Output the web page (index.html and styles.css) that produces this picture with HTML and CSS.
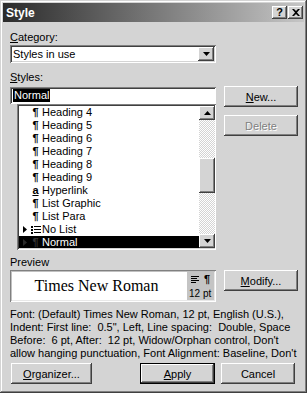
FILE: index.html
```html
<!DOCTYPE html>
<html lang="en">
<head>
  <meta charset="UTF-8" />
  <title>Style</title>
  <link rel="stylesheet" href="styles.css">
</head>
<body>
  <div class="window">
    <div class="titlebar">
      <span class="title">Style</span>
      <div class="caption-buttons">
        <span class="cap-btn help">?</span>
        <span class="cap-btn">
          <svg width="8" height="7" viewBox="0 0 8 7"><path d="M0 0h2l2 2 2-2h2L5 3.5 8 7H6L4 5 2 7H0l3-3.5z" fill="#000"/></svg>
        </span>
      </div>
    </div>

    <div class="content">
      <div class="top">
        <div class="label cat-label"><u>C</u>ategory:</div>
        <div class="combo">
          <span class="combo-text">Styles in use</span>
          <span class="drop-btn">
            <svg width="7" height="4" viewBox="0 0 7 4"><path d="M0 0h7L3.5 4z" fill="#000"/></svg>
          </span>
        </div>

        <div class="label styles-label"><u>S</u>tyles:</div>
        <div class="styles-box">
          <div class="field"><span class="sel-text">Normal</span></div>
          <div class="listbox">
            <ul class="items">
              <li><span class="marker"></span><span class="icon para">¶</span>Heading 4</li>
              <li><span class="marker"></span><span class="icon para">¶</span>Heading 5</li>
              <li><span class="marker"></span><span class="icon para">¶</span>Heading 6</li>
              <li><span class="marker"></span><span class="icon para">¶</span>Heading 7</li>
              <li><span class="marker"></span><span class="icon para">¶</span>Heading 8</li>
              <li><span class="marker"></span><span class="icon para">¶</span>Heading 9</li>
              <li><span class="marker"></span><span class="icon char">a</span>Hyperlink</li>
              <li><span class="marker"></span><span class="icon para">¶</span>List Graphic</li>
              <li><span class="marker"></span><span class="icon para">¶</span>List Para</li>
              <li>
                <span class="marker"><svg width="4" height="7" viewBox="0 0 4 7"><path d="M0 0l4 3.5L0 7z" fill="#000"/></svg></span>
                <span class="icon">
                  <svg width="10" height="8" viewBox="0 0 10 8"><path d="M0 0h2v2H0zM0 3h2v2H0zM0 6h2v2H0zM3 0h7v1H3zM3 3h7v1H3zM3 6h7v1H3z" fill="#000"/></svg>
                </span>No List
              </li>
              <li class="selected">
                <span class="marker"><svg width="4" height="7" viewBox="0 0 4 7"><path d="M0 0l4 3.5L0 7z" fill="#2a2a2a"/></svg></span>
                <span class="icon para">¶</span>Normal
              </li>
            </ul>
            <div class="scrollbar">
              <span class="sb-btn"><svg width="7" height="4" viewBox="0 0 7 4"><path d="M3.5 0L7 4H0z" fill="#000"/></svg></span>
              <div class="track"><span class="thumb"></span></div>
              <span class="sb-btn"><svg width="7" height="4" viewBox="0 0 7 4"><path d="M0 0h7L3.5 4z" fill="#000"/></svg></span>
            </div>
          </div>
        </div>
        <div class="side-buttons">
          <span class="btn"><u>N</u>ew...</span>
          <span class="btn disabled">Delete</span>
        </div>

        <div class="label preview-label">Preview</div>
        <div class="preview">
          <div class="preview-text">Times New Roman</div>
          <div class="preview-info">
            <div class="info-icons">
              <svg width="8" height="7" viewBox="0 0 8 7"><path d="M0 0h8v1H0zM0 2h6v1H0zM0 4h8v1H0zM0 6h5v1H0z" fill="#000"/></svg>
              <span class="info-para">¶</span>
            </div>
            <div class="info-size">12 pt</div>
          </div>
        </div>
        <span class="btn modify"><u>M</u>odify...</span>
      </div>

      <p class="description">Font: (Default) Times New Roman, 12 pt, English (U.S.), Indent: First line:&nbsp; 0.5", Left, Line spacing:&nbsp; Double, Space Before:&nbsp; 6 pt, After:&nbsp; 12 pt, Widow/Orphan control, Don't allow hanging punctuation, Font Alignment: Baseline, Don't</p>

      <div class="footer">
        <span class="btn organizer"><u>O</u>rganizer...</span>
        <span class="btn default apply"><u>A</u>pply</span>
        <span class="btn cancel">Cancel</span>
      </div>
    </div>
  </div>
</body>
</html>
```

FILE: styles.css
```css
* {
  box-sizing: border-box;
}

html, body {
  margin: 0;
  padding: 0;
}

body {
  width: 307px;
  height: 393px;
  overflow: hidden;
  background: #d4d4d4;
  font-family: 'Liberation Sans', Arial, sans-serif;
  font-size: 11px;
  color: #000;
}

u {
  text-decoration: underline;
  text-underline-offset: 1px;
}

.window {
  width: 307px;
  height: 393px;
  padding: 3px;
  background: #d4d4d4;
  box-shadow: inset -1px -1px #404040, inset 1px 1px #d4d4d4, inset -2px -2px #808080, inset 2px 2px #fff;
}

/* title bar */
.titlebar {
  height: 19px;
  display: flex;
  align-items: center;
  justify-content: space-between;
  padding: 0 1px 0 3px;
  background: linear-gradient(to right, #2b2b2b, #c6c6c6);
}

.title {
  color: #fff;
  font-weight: bold;
  font-size: 12px;
}

.caption-buttons {
  display: flex;
  gap: 1px;
}

.cap-btn {
  width: 15px;
  height: 13px;
  display: flex;
  align-items: center;
  justify-content: center;
  background: #d4d4d4;
  box-shadow: inset -1px -1px #404040, inset 1px 1px #fff, inset -2px -2px #808080;
}

.cap-btn.help {
  font-weight: bold;
  font-size: 11px;
  line-height: 13px;
}

/* content */
.content {
  padding: 0 7px;
}

.top {
  display: grid;
  grid-template-columns: 206px 74px;
  column-gap: 8px;
  grid-template-areas:
    "cat ."
    "combo ."
    "slabel ."
    "styles side"
    "plabel ."
    "preview modify";
}

.label {
  line-height: 13px;
  height: 13px;
}

.cat-label {
  grid-area: cat;
  margin-top: 9px;
}

.combo {
  grid-area: combo;
  margin-top: 1px;
  height: 18px;
  display: flex;
  align-items: center;
  padding: 2px;
  background: #fff;
  box-shadow: inset 1px 1px #808080, inset -1px -1px #fff, inset 2px 2px #404040, inset -2px -2px #d4d4d4;
}

.combo-text {
  flex: 1;
  padding-left: 1px;
}

.drop-btn, .sb-btn {
  width: 16px;
  height: 14px;
  display: flex;
  align-items: center;
  justify-content: center;
  background: #d4d4d4;
  box-shadow: inset -1px -1px #404040, inset 1px 1px #fff, inset -2px -2px #808080;
}

.styles-label {
  grid-area: slabel;
  margin-top: 8px;
}

.styles-box {
  grid-area: styles;
  margin-top: 3px;
}

.field {
  height: 17px;
  padding: 2px 3px;
  background: #fff;
  box-shadow: inset 1px 1px #808080, inset -1px -1px #fff, inset 2px 2px #404040;
}

.sel-text {
  display: inline-block;
  background: #000;
  color: #fff;
  line-height: 13px;
  padding: 0 1px;
}

.listbox {
  margin-left: 7px;
  height: 146px;
  display: flex;
  padding: 2px 1px 2px 2px;
  background: #fff;
  box-shadow: inset 1px 1px #808080, inset -1px -1px #fff, inset 2px 2px #404040, inset -2px -2px #d4d4d4;
}

.items {
  flex: 1;
  margin: 0;
  padding: 0;
  list-style: none;
  overflow: hidden;
}

.items li {
  height: 13px;
  line-height: 13px;
  display: flex;
  align-items: center;
  white-space: nowrap;
}

.marker {
  width: 11px;
  display: flex;
  align-items: center;
  justify-content: center;
}

.icon {
  width: 11px;
  margin-right: 1px;
  display: flex;
  align-items: center;
  justify-content: center;
  font-weight: bold;
}

.icon.char {
  text-decoration: underline;
  text-underline-offset: 1px;
}

.items li.selected {
  background: #000;
  color: #fff;
}

.selected .icon {
  color: #333;
}

.scrollbar {
  width: 16px;
  display: flex;
  flex-direction: column;
}

.sb-btn {
  height: 14px;
  flex: none;
}

.track {
  flex: 1;
  padding-top: 38px;
  background-color: #ececec;
  background-image: repeating-conic-gradient(#fff 0 25%, #d4d4d4 0 50%);
  background-size: 2px 2px;
}

.thumb {
  display: block;
  height: 35px;
  background: #d4d4d4;
  box-shadow: inset -1px -1px #404040, inset 1px 1px #fff, inset -2px -2px #808080;
}

/* buttons */
.btn {
  height: 21px;
  display: flex;
  align-items: center;
  justify-content: center;
  background: #d4d4d4;
  box-shadow: inset -1px -1px #404040, inset 1px 1px #fff, inset -2px -2px #808080;
}

.btn.disabled {
  color: #808080;
  text-shadow: 1px 1px #fff;
}

.btn.default {
  box-shadow: inset 0 0 0 1px #000, inset -2px -2px #404040, inset 2px 2px #fff, inset -3px -3px #808080;
}

.side-buttons {
  grid-area: side;
  display: flex;
  flex-direction: column;
  gap: 8px;
  margin-top: 2px;
}

.preview-label {
  grid-area: plabel;
  margin-top: 6px;
}

.preview {
  grid-area: preview;
  margin-top: 1px;
  height: 32px;
  display: flex;
  padding: 2px;
  background: #fff;
  box-shadow: inset 1px 1px #808080, inset -1px -1px #fff, inset 2px 2px #c0c0c0, inset -2px -2px #e8e8e8;
}

.preview-text {
  flex: 1;
  display: flex;
  align-items: center;
  justify-content: center;
  padding-right: 6px;
  font-family: 'Liberation Serif', 'Times New Roman', serif;
  font-size: 16px;
}

.preview-info {
  width: 27px;
  background: #c4c4c4;
  display: flex;
  flex-direction: column;
  justify-content: space-between;
  padding: 2px 0 1px 2px;
  font-size: 10px;
  line-height: 11px;
}

.info-icons {
  display: flex;
  align-items: center;
  gap: 5px;
  padding-left: 2px;
}

.info-para {
  font-weight: bold;
  font-size: 11px;
}

.modify {
  grid-area: modify;
  margin-top: 1px;
}

.description {
  margin: 6px 0 0;
  width: 289px;
  height: 52px;
  line-height: 13px;
  overflow: hidden;
}

.footer {
  display: flex;
  margin-top: 3px;
  padding-left: 1px;
}

.organizer {
  width: 81px;
}

.apply {
  width: 75px;
  margin-left: auto;
}

.cancel {
  width: 74px;
  margin-left: 6px;
  margin-right: 2px;
}
```
